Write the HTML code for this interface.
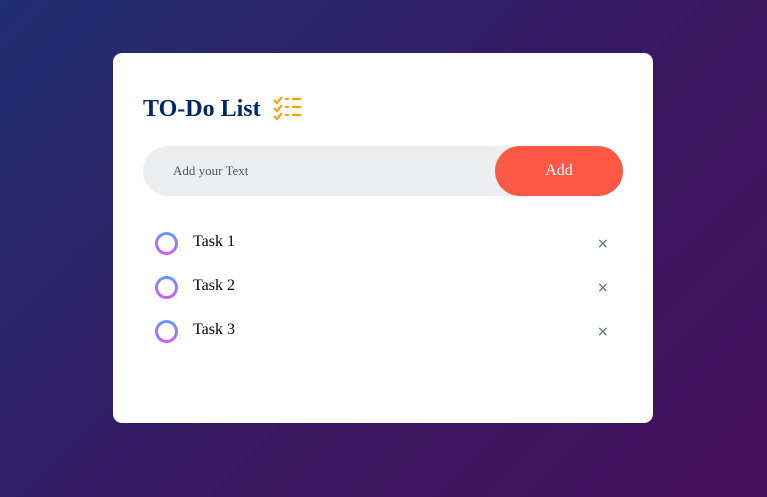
<!DOCTYPE html><html><head><style>
body{margin:0;width:767px;height:497px;background:linear-gradient(135deg,#1f2f70,#3b1760 60%,#45105e);font-family:"Liberation Serif",serif;position:relative;overflow:hidden}
.card{position:absolute;left:113px;top:53px;width:540px;height:370px;background:#fff;border-radius:9px}
h1{position:absolute;left:30px;top:41px;margin:0;font-size:24px;color:#002765;font-weight:bold;line-height:30px}
.ic{position:absolute;left:160px;top:43px}
.inp{position:absolute;left:30px;top:93px;width:480px;height:50px;background:#edeef0;border-radius:25px}
.inp span{position:absolute;left:30px;top:17px;font-size:13px;color:#555}
.btn{position:absolute;right:0;top:0;width:128px;height:50px;background:#ff5945;border-radius:25px;color:#fff;font-size:16px;text-align:center;line-height:50px}
.t{position:absolute;left:42px;height:24px;width:440px}
.c{position:absolute;left:0;top:0;width:17px;height:17px;border-radius:50%;border:3px solid transparent;background:linear-gradient(#fff,#fff) padding-box,linear-gradient(#5b9cff,#d35bff) border-box}
.t b{position:absolute;left:38px;top:1px;font-weight:normal;font-size:16px;color:#000}
.t i{position:absolute;left:442px;top:4px;font-style:normal;color:#4a6a99;font-size:14px;font-family:"DejaVu Sans",sans-serif}
</style></head><body><div class="card">
<h1>TO-Do List</h1>
<svg class="ic" width="30" height="26" viewBox="0 0 30 26" fill="none" stroke="#f7a21b" stroke-width="2.2"><path d="M1 4l3 3 5-6M1 12l3 3 5-6M1 20l3 3 5-6M12 3h4M19 3h9M12 11h4M19 11h9M12 19h4M19 19h9"/></svg>
<div class="inp"><span>Add your Text</span><div class="btn">Add</div></div>
<div class="t" style="top:179px"><div class="c"></div><b>Task 1</b><i>×</i></div>
<div class="t" style="top:223px"><div class="c"></div><b>Task 2</b><i>×</i></div>
<div class="t" style="top:267px"><div class="c"></div><b>Task 3</b><i>×</i></div>
</div></body></html>
